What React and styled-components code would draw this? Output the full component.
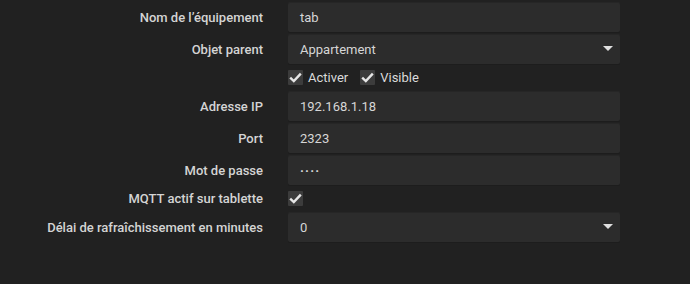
// App.jsx
import React from 'react';
import styled, { createGlobalStyle } from 'styled-components';

const GlobalStyle = createGlobalStyle`
  html, body {
    margin: 0;
    padding: 0;
    background-color: #212121;
  }
  body {
    font-family: Roboto, "Liberation Sans", sans-serif;
    font-size: 13px;
  }
`;

const Form = styled.div`
  display: grid;
  grid-template-columns: 263px 332px;
  align-content: start;
  column-gap: 25px;
  row-gap: 2px;
  padding-top: 2px;
  width: 690px;
  height: 284px;
  box-sizing: border-box;
  background-color: #212121;
`;

const Label = styled.div`
  display: flex;
  align-items: center;
  justify-content: flex-end;
  color: #d4d4d4;
  font-weight: 500;
  font-size: 13px;
  white-space: nowrap;
`;

const Field = styled.div`
  position: relative;
  display: flex;
  align-items: center;
  height: 30px;
  padding: 0 12px;
  box-sizing: border-box;
  background-color: #2c2c2c;
  border-radius: 2px;
  box-shadow: inset 0 1px 0 #262626, 0 1px 0 #1d1d1d;
  color: #d6d6d6;
  font-size: 13px;
  font-weight: ${(p) => (p.$secret ? 700 : 400)};
  letter-spacing: ${(p) => (p.$secret ? '1.2px' : '0')};
`;

const Caret = styled.span`
  position: absolute;
  right: 7px;
  top: 12px;
  width: 0;
  height: 0;
  border-left: 5px solid transparent;
  border-right: 5px solid transparent;
  border-top: 5px solid #e0e0e0;
`;

const CheckRow = styled.div`
  display: flex;
  align-items: center;
  gap: 5px;
  height: 23px;
  color: #dadada;
  font-size: 13px;
`;

const CheckItem = styled.label`
  display: flex;
  align-items: center;
  gap: 5px;
  margin-right: 7px;
`;

const Box = styled.span`
  display: flex;
  align-items: center;
  justify-content: center;
  width: 15px;
  height: 15px;
  background-color: #3c3c3c;
  border-radius: 1px;
`;

const Check = () => (
  <Box>
    <svg width="13" height="11" viewBox="0 0 13 11">
      <path d="M1.2 5.6 L4.8 9 L11.8 1.6" fill="none" stroke="#e6e6e6" strokeWidth="2.4" />
    </svg>
  </Box>
);

const Input = ({ value, select, secret }) => (
  <Field $secret={secret}>
    {value}
    {select && <Caret />}
  </Field>
);

export default function App() {
  return (
    <>
      <GlobalStyle />
      <Form>
        <Label>Nom de l’équipement</Label>
        <Input value="tab" />

        <Label>Objet parent</Label>
        <Input value="Appartement" select />

        <Label />
        <CheckRow>
          <CheckItem><Check />Activer</CheckItem>
          <CheckItem><Check />Visible</CheckItem>
        </CheckRow>

        <Label>Adresse IP</Label>
        <Input value="192.168.1.18" />

        <Label>Port</Label>
        <Input value="2323" />

        <Label>Mot de passe</Label>
        <Input value="····" secret />

        <Label>MQTT actif sur tablette</Label>
        <CheckRow>
          <Check />
        </CheckRow>

        <Label>Délai de rafraîchissement en minutes</Label>
        <Input value="0" select />
      </Form>
    </>
  );
}
